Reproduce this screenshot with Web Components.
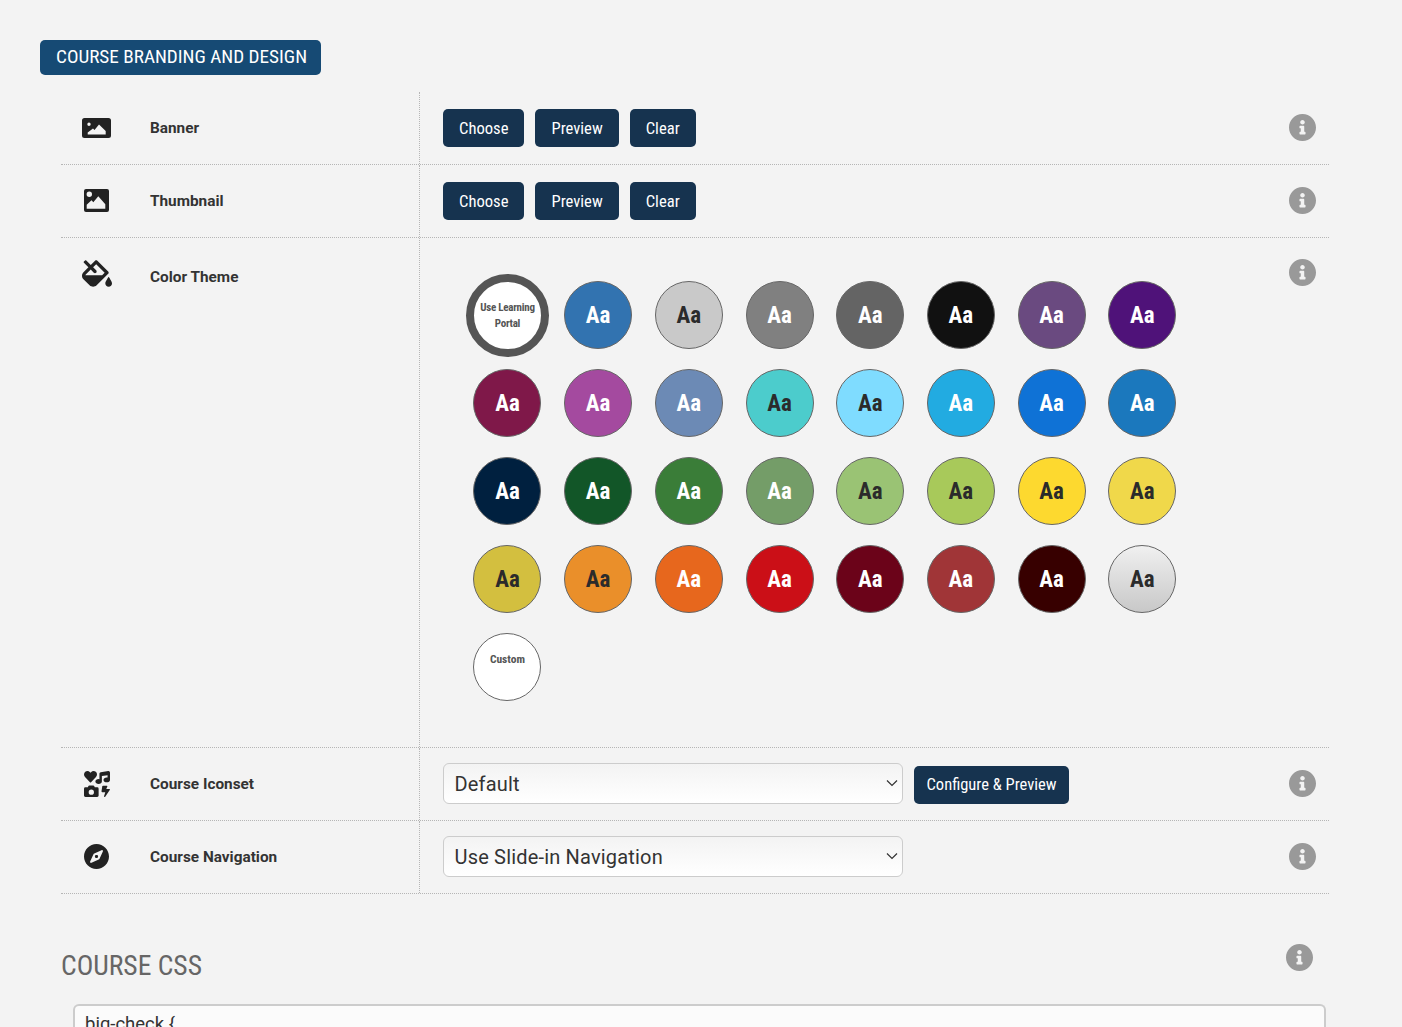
<!DOCTYPE html>
<html>
<head>
<meta charset="utf-8">
<title>Course branding</title>
<style>
  html, body { margin: 0; height: 1027px; overflow: hidden; background: #f3f3f3; }
  body { font-family: Roboto, "Liberation Sans", sans-serif; color: #333; }
  svg { display: block; fill: #222; }
</style>
</head>
<body>
<course-page>
  <section-title>COURSE BRANDING AND DESIGN</section-title>

  <setting-row label="Banner">
    <svg slot="icon" width="29" height="20" viewBox="0 0 29 20"><path fill-rule="evenodd" d="M2.500 0h24A2.500 2.500 0 0 1 29 2.500v15a2.500 2.500 0 0 1-2.500 2.500h-24A2.500 2.500 0 0 1 0 17.500v-15A2.500 2.500 0 0 1 2.500 0zM7 4.500a1.700 1.700 0 1 0 0 3.400 1.700 1.700 0 0 0 0-3.400zM5.700 16.500h18v-3.500l-6.700-6.500-4.500 5.500-1.500-1.500-5.300 4z"/></svg>
    <tool-button>Choose</tool-button>
    <tool-button>Preview</tool-button>
    <tool-button>Clear</tool-button>
  </setting-row>

  <setting-row label="Thumbnail">
    <svg slot="icon" width="25" height="23" viewBox="0 0 25 23"><path fill-rule="evenodd" d="M2 0h21a2 2 0 0 1 2 2v19a2 2 0 0 1-2 2H2a2 2 0 0 1-2-2V2a2 2 0 0 1 2-2zM5.300 2.600a2.700 2.700 0 1 0 0 5.400 2.700 2.700 0 0 0 0-5.400zM2.700 19.700h18.600v-4.500l-7-7.900-5 6-1.800-2-4.800 4.500z"/></svg>
    <tool-button>Choose</tool-button>
    <tool-button>Preview</tool-button>
    <tool-button>Clear</tool-button>
  </setting-row>

  <setting-row label="Color Theme" tall>
    <svg slot="icon" width="30" height="27" viewBox="0 0 576 512"><path d="M512 320s-64 92.650-64 128c0 35.350 28.660 64 64 64s64-28.650 64-64-64-128-64-128zm-9.370-102.940L294.940 9.370C288.690 3.120 280.500 0 272.310 0s-16.380 3.120-22.620 9.370l-81.580 81.580L81.930 4.760c-6.250-6.250-16.380-6.250-22.620 0L36.690 27.380c-6.240 6.250-6.240 16.380 0 22.620l86.190 86.180-94.760 94.760c-37.490 37.480-37.490 98.260 0 135.750l117.190 117.190c18.740 18.740 43.310 28.120 67.870 28.120 24.570 0 49.130-9.370 67.870-28.120l221.570-221.570c12.500-12.500 12.500-32.750.01-45.250zm-116.220 70.970H65.930c1.360-3.840 3.570-7.980 7.430-11.830l13.150-13.150 81.610-81.610 58.600 58.600c12.490 12.490 32.750 12.490 45.240 0s12.490-32.750 0-45.240l-58.600-58.600 58.950-58.950 162.440 162.440-48.340 48.340z"/></svg>
    <swatch-grid>
      <color-swatch selected bg="#fff" fg="#555"><span>Use Learning Portal</span></color-swatch>
      <color-swatch bg="#3273b0" fg="#fff">Aa</color-swatch>
      <color-swatch bg="#c9c9c9" fg="#2b2b2b">Aa</color-swatch>
      <color-swatch bg="#808080" fg="#fff">Aa</color-swatch>
      <color-swatch bg="#646464" fg="#fff">Aa</color-swatch>
      <color-swatch bg="#111111" fg="#fff">Aa</color-swatch>
      <color-swatch bg="#6a4a80" fg="#fff">Aa</color-swatch>
      <color-swatch bg="#4f1279" fg="#fff">Aa</color-swatch>

      <color-swatch bg="#7f1849" fg="#fff">Aa</color-swatch>
      <color-swatch bg="#a44a9f" fg="#fff">Aa</color-swatch>
      <color-swatch bg="#6c8ab5" fg="#fff">Aa</color-swatch>
      <color-swatch bg="#4ccccc" fg="#2b2b2b">Aa</color-swatch>
      <color-swatch bg="#7fdcff" fg="#2b2b2b">Aa</color-swatch>
      <color-swatch bg="#22abe1" fg="#fff">Aa</color-swatch>
      <color-swatch bg="#0f72d6" fg="#fff">Aa</color-swatch>
      <color-swatch bg="#1b78bd" fg="#fff">Aa</color-swatch>

      <color-swatch bg="#00203f" fg="#fff">Aa</color-swatch>
      <color-swatch bg="#125628" fg="#fff">Aa</color-swatch>
      <color-swatch bg="#3a7d38" fg="#fff">Aa</color-swatch>
      <color-swatch bg="#749d68" fg="#fff">Aa</color-swatch>
      <color-swatch bg="#9ac374" fg="#2b2b2b">Aa</color-swatch>
      <color-swatch bg="#a8c95a" fg="#2b2b2b">Aa</color-swatch>
      <color-swatch bg="#fdd92f" fg="#2b2b2b">Aa</color-swatch>
      <color-swatch bg="#f0d84a" fg="#2b2b2b">Aa</color-swatch>

      <color-swatch bg="#d3bf3f" fg="#2b2b2b">Aa</color-swatch>
      <color-swatch bg="#ea8f2a" fg="#2b2b2b">Aa</color-swatch>
      <color-swatch bg="#e7671d" fg="#fff">Aa</color-swatch>
      <color-swatch bg="#cb0f17" fg="#fff">Aa</color-swatch>
      <color-swatch bg="#6b0319" fg="#fff">Aa</color-swatch>
      <color-swatch bg="#a03537" fg="#fff">Aa</color-swatch>
      <color-swatch bg="#370000" fg="#fff">Aa</color-swatch>
      <color-swatch bg="linear-gradient(#f0f0f0,#c8c8c8)" fg="#2b2b2b">Aa</color-swatch>

      <color-swatch custom bg="#fff" fg="#555"><span>Custom</span></color-swatch>
    </swatch-grid>
  </setting-row>

  <setting-row label="Course Iconset">
    <svg slot="icon" width="26" height="26" viewBox="0 0 512 512"><path d="M116.650 219.350a15.680 15.680 0 0 0 22.650 0l96.750-99.830c28.150-29 26.500-77.100-4.910-103.880C203.750-7.700 163-3.500 137.860 22.440L128 32.580l-9.850-10.140C93.050-3.500 52.250-7.700 24.860 15.640c-31.410 26.780-33 74.850-5 103.880zm143.920 100.490h-48l-7.080-14.240a27.390 27.390 0 0 0-25.660-17.780h-71.710a27.390 27.390 0 0 0-25.660 17.780l-7 14.240h-48A27.450 27.450 0 0 0 0 347.300v137.250A27.440 27.440 0 0 0 27.43 512h233.140A27.450 27.450 0 0 0 288 484.550V347.300a27.450 27.450 0 0 0-27.430-27.460zM144 468a52 52 0 1 1 52-52 52 52 0 0 1-52 52zm355.400-115.900h-60.580l22.360-50.750c2.100-6.650-3.930-13.210-12.180-13.210h-75.590c-6.300 0-11.660 3.900-12.500 9.100l-16.800 106.930c-1 6.300 4.880 11.890 12.500 11.890h62.310l-24.200 83c-1.890 6.650 4.200 12.900 12.230 12.900a13.260 13.260 0 0 0 10.920-5.250l92.400-138.910c4.880-6.910-1.160-15.700-10.870-15.700zM478.080.33 329.510 23.170C314.870 25.420 304 38.920 304 54.830V161.600a83.250 83.250 0 0 0-16-1.700c-35.350 0-64 21.480-64 48s28.650 48 64 48c35.200 0 63.730-21.320 64-47.660V99.660l112-17.220v47.180a83.250 83.250 0 0 0-16-1.700c-35.350 0-64 21.480-64 48s28.650 48 64 48c35.200 0 63.730-21.320 64-47.660V32c0-19.480-16-34.420-33.920-31.670z"/></svg>
    <option-select value="Default"></option-select>
    <tool-button wide>Configure &amp; Preview</tool-button>
  </setting-row>

  <setting-row label="Course Navigation">
    <svg slot="icon" width="25" height="25" viewBox="0 8 496 496"><path d="M225.380 233.370c-12.500 12.500-12.500 32.760 0 45.250 12.490 12.500 32.760 12.500 45.250 0 12.500-12.500 12.500-32.760 0-45.250-12.500-12.490-32.760-12.490-45.250 0zM248 8C111.030 8 0 119.030 0 256s111.030 248 248 248 248-111.030 248-248S384.970 8 248 8zm126.140 148.050L308.170 300.400a31.938 31.938 0 0 1-15.770 15.770l-144.340 65.970c-16.650 7.610-33.810-9.550-26.200-26.200l65.980-144.350a31.938 31.938 0 0 1 15.770-15.770l144.340-65.970c16.650-7.600 33.800 9.550 26.190 26.200z"/></svg>
    <option-select value="Use Slide-in Navigation"></option-select>
  </setting-row>

  <css-block></css-block>
</course-page>

<script>
// small helper so every component can stamp its shadow root from a string
function shadow(el, html) {
  el.attachShadow({ mode: "open" }).innerHTML = html;
  return el.shadowRoot;
}

const narrow = `font-family: "Roboto Condensed", Roboto, "Liberation Sans", sans-serif; font-stretch: condensed;`;

const infoPath = "M256 8C119.043 8 8 119.083 8 256c0 136.997 111.043 248 248 248s248-111.003 248-248C504 119.083 392.957 8 256 8zm0 110c23.196 0 42 18.804 42 42s-18.804 42-42 42-42-18.804-42-42 18.804-42 42-42zm56 254c0 6.627-5.373 12-12 12h-88c-6.627 0-12-5.373-12-12v-24c0-6.627 5.373-12 12-12h12v-64h-12c-6.627 0-12-5.373-12-12v-24c0-6.627 5.373-12 12-12h64c6.627 0 12 5.373 12 12v100h12c6.627 0 12 5.373 12 12v24z";

class InfoIcon extends HTMLElement {
  constructor () {
    super();
    shadow(this, `
      <style>
        :host { display: block; width: 27px; height: 27px; }
        svg { display: block; fill: #999; }
      </style>
      <svg width="27" height="27" viewBox="8 8 496 496"><path d="${infoPath}"/></svg>`);
  }
}

class CoursePage extends HTMLElement {
  constructor () {
    super();
    shadow(this, `
      <style>
        :host { display: block; padding-top: 40px; }
      </style>
      <slot></slot>`);
  }
}

class SectionTitle extends HTMLElement {
  constructor () {
    super();
    shadow(this, `
      <style>
        :host { display: block; margin: 0 0 17px 40px; }
        div {
          display: inline-flex; align-items: center; box-sizing: border-box;
          width: 281px; height: 35px; padding: 0 0 2px 16px;
          background: #164a74; border-radius: 5px; color: #fff;
          ${narrow} font-size: 19.2px; white-space: nowrap;
        }
      </style>
      <div><slot></slot></div>`);
  }
}

class SettingRow extends HTMLElement {
  constructor () {
    super();
    shadow(this, `
      <style>
        :host {
          display: grid; grid-template-columns: 358px 1fr 40px;
          margin: 0 73px 0 61px; width: 1268px;
          border-bottom: 1px dotted #b5b5b5;
        }
        .head {
          display: flex; align-items: center; height: 72px;
        }
        .icon { width: 71px; margin-top: -1px; display: flex; justify-content: center; flex: none; }
        .label { margin-left: 18px; font: 700 15.35px Roboto, sans-serif; color: #333; }
        .body {
          border-left: 1px dotted #b5b5b5; padding: 0 0 2px 23px; min-height: 70px;
          display: flex; align-items: center; gap: 11px;
        }
        .info { height: 70px; display: flex; align-items: center; }
        :host([tall]) .label { padding-top: 6px; }
        :host([tall]) .info { height: 68px; }
        :host([tall]) .body { display: block; padding-top: 33.25px; padding-bottom: 35.75px; }
        :host([tall]) .head { align-self: start; }
      </style>
      <div class="head">
        <div class="icon"><slot name="icon"></slot></div>
        <div class="label"></div>
      </div>
      <div class="body"><slot></slot></div>
      <div class="info"><info-icon></info-icon></div>`);
    this.shadowRoot.querySelector(".label").textContent = this.getAttribute("label");
  }
}

class ToolButton extends HTMLElement {
  constructor () {
    super();
    shadow(this, `
      <style>
        :host { display: inline-block; flex: none; }
        button {
          display: block; height: 38.5px; margin-top: 2px; padding: 0 16px; border: 0; border-radius: 5px;
          background: #16334f; color: #fff; ${narrow} font-size: 16.6px; white-space: nowrap;
        }
        :host([wide]) button { height: 38px; padding: 0 12.5px; margin-top: 3px; font-size: 16.5px; }
      </style>
      <button><slot></slot></button>`);
  }
}

class SwatchGrid extends HTMLElement {
  constructor () {
    super();
    shadow(this, `
      <style>
        :host {
          display: grid; grid-template-columns: repeat(8, 90.7px); grid-auto-rows: 88px;
          margin-left: 19.1px; place-items: center;
        }
      </style>
      <slot></slot>`);
  }
}

class ColorSwatch extends HTMLElement {
  constructor () {
    super();
    shadow(this, `
      <style>
        :host { display: block; }
        div {
          box-sizing: border-box; width: 68px; height: 68px; border-radius: 50%;
          border: 1px solid #666; display: flex; align-items: center; justify-content: center;
          text-align: center; ${narrow} font-weight: 700; font-size: 23px;
        }
        :host([selected]) div {
          width: 83.5px; height: 83.5px; border: 8px solid #555; padding-top: 1px;
          font-size: 11px; line-height: 16px; letter-spacing: -.25px;
        }
        :host([custom]) div {
          font-size: 11.5px; align-items: flex-start; padding-top: 16.5px; line-height: 16px;
        }
      </style>
      <div><slot></slot></div>`);
    const d = this.shadowRoot.querySelector("div");
    d.style.background = this.getAttribute("bg");
    d.style.color = this.getAttribute("fg");
  }
}

class OptionSelect extends HTMLElement {
  constructor () {
    super();
    shadow(this, `
      <style>
        :host { display: block; position: relative; width: 460px; height: 41px; flex: none; }
        select {
          appearance: none; -webkit-appearance: none; box-sizing: border-box;
          width: 100%; height: 100%; padding: 2px 30px 0 10.5px; margin: 0;
          border: 1px solid #ccc; border-radius: 6px;
          background: linear-gradient(#f3f3f3, #fff);
          font: 400 20px Roboto, sans-serif; letter-spacing: .18px; color: #333;
        }
        svg { position: absolute; right: 5px; top: 16px; fill: none; stroke: #333; stroke-width: 1.2; pointer-events: none; }
      </style>
      <select><option></option></select>
      <svg width="12" height="8" viewBox="0 0 12 8"><path d="M1 1.5l5 5 5-5"/></svg>`);
    this.shadowRoot.querySelector("option").textContent = this.getAttribute("value");
  }
}

class CssBlock extends HTMLElement {
  constructor () {
    super();
    shadow(this, `
      <style>
        :host { display: block; padding: 40px 73px 0 61px; position: relative; }
        .top { display: flex; justify-content: space-between; height: 70px; }
        h2 { margin: 14px 0 0; font: 400 27.6px/36px "Roboto Condensed", Roboto, sans-serif; font-stretch: condensed; color: #666; }
        info-icon { margin: 10px 16px 0 0; }
        textarea {
          display: block; box-sizing: border-box; width: 1253px; height: 23px; margin-left: 12px;
          border: 2px solid #ccc; border-bottom: 0; border-radius: 6px 6px 0 0; background: #fbfbfb; resize: none;
          padding: 7px 10px 0; overflow: hidden; font: 400 18.5px Roboto, sans-serif; color: #333; outline: 0;
        }
      </style>
      <div class="top"><h2>COURSE CSS</h2><info-icon></info-icon></div>
      <textarea>big-check {</textarea>`);
  }
}

customElements.define("info-icon", InfoIcon);
customElements.define("course-page", CoursePage);
customElements.define("section-title", SectionTitle);
customElements.define("setting-row", SettingRow);
customElements.define("tool-button", ToolButton);
customElements.define("swatch-grid", SwatchGrid);
customElements.define("color-swatch", ColorSwatch);
customElements.define("option-select", OptionSelect);
customElements.define("css-block", CssBlock);
</script>
</body>
</html>
